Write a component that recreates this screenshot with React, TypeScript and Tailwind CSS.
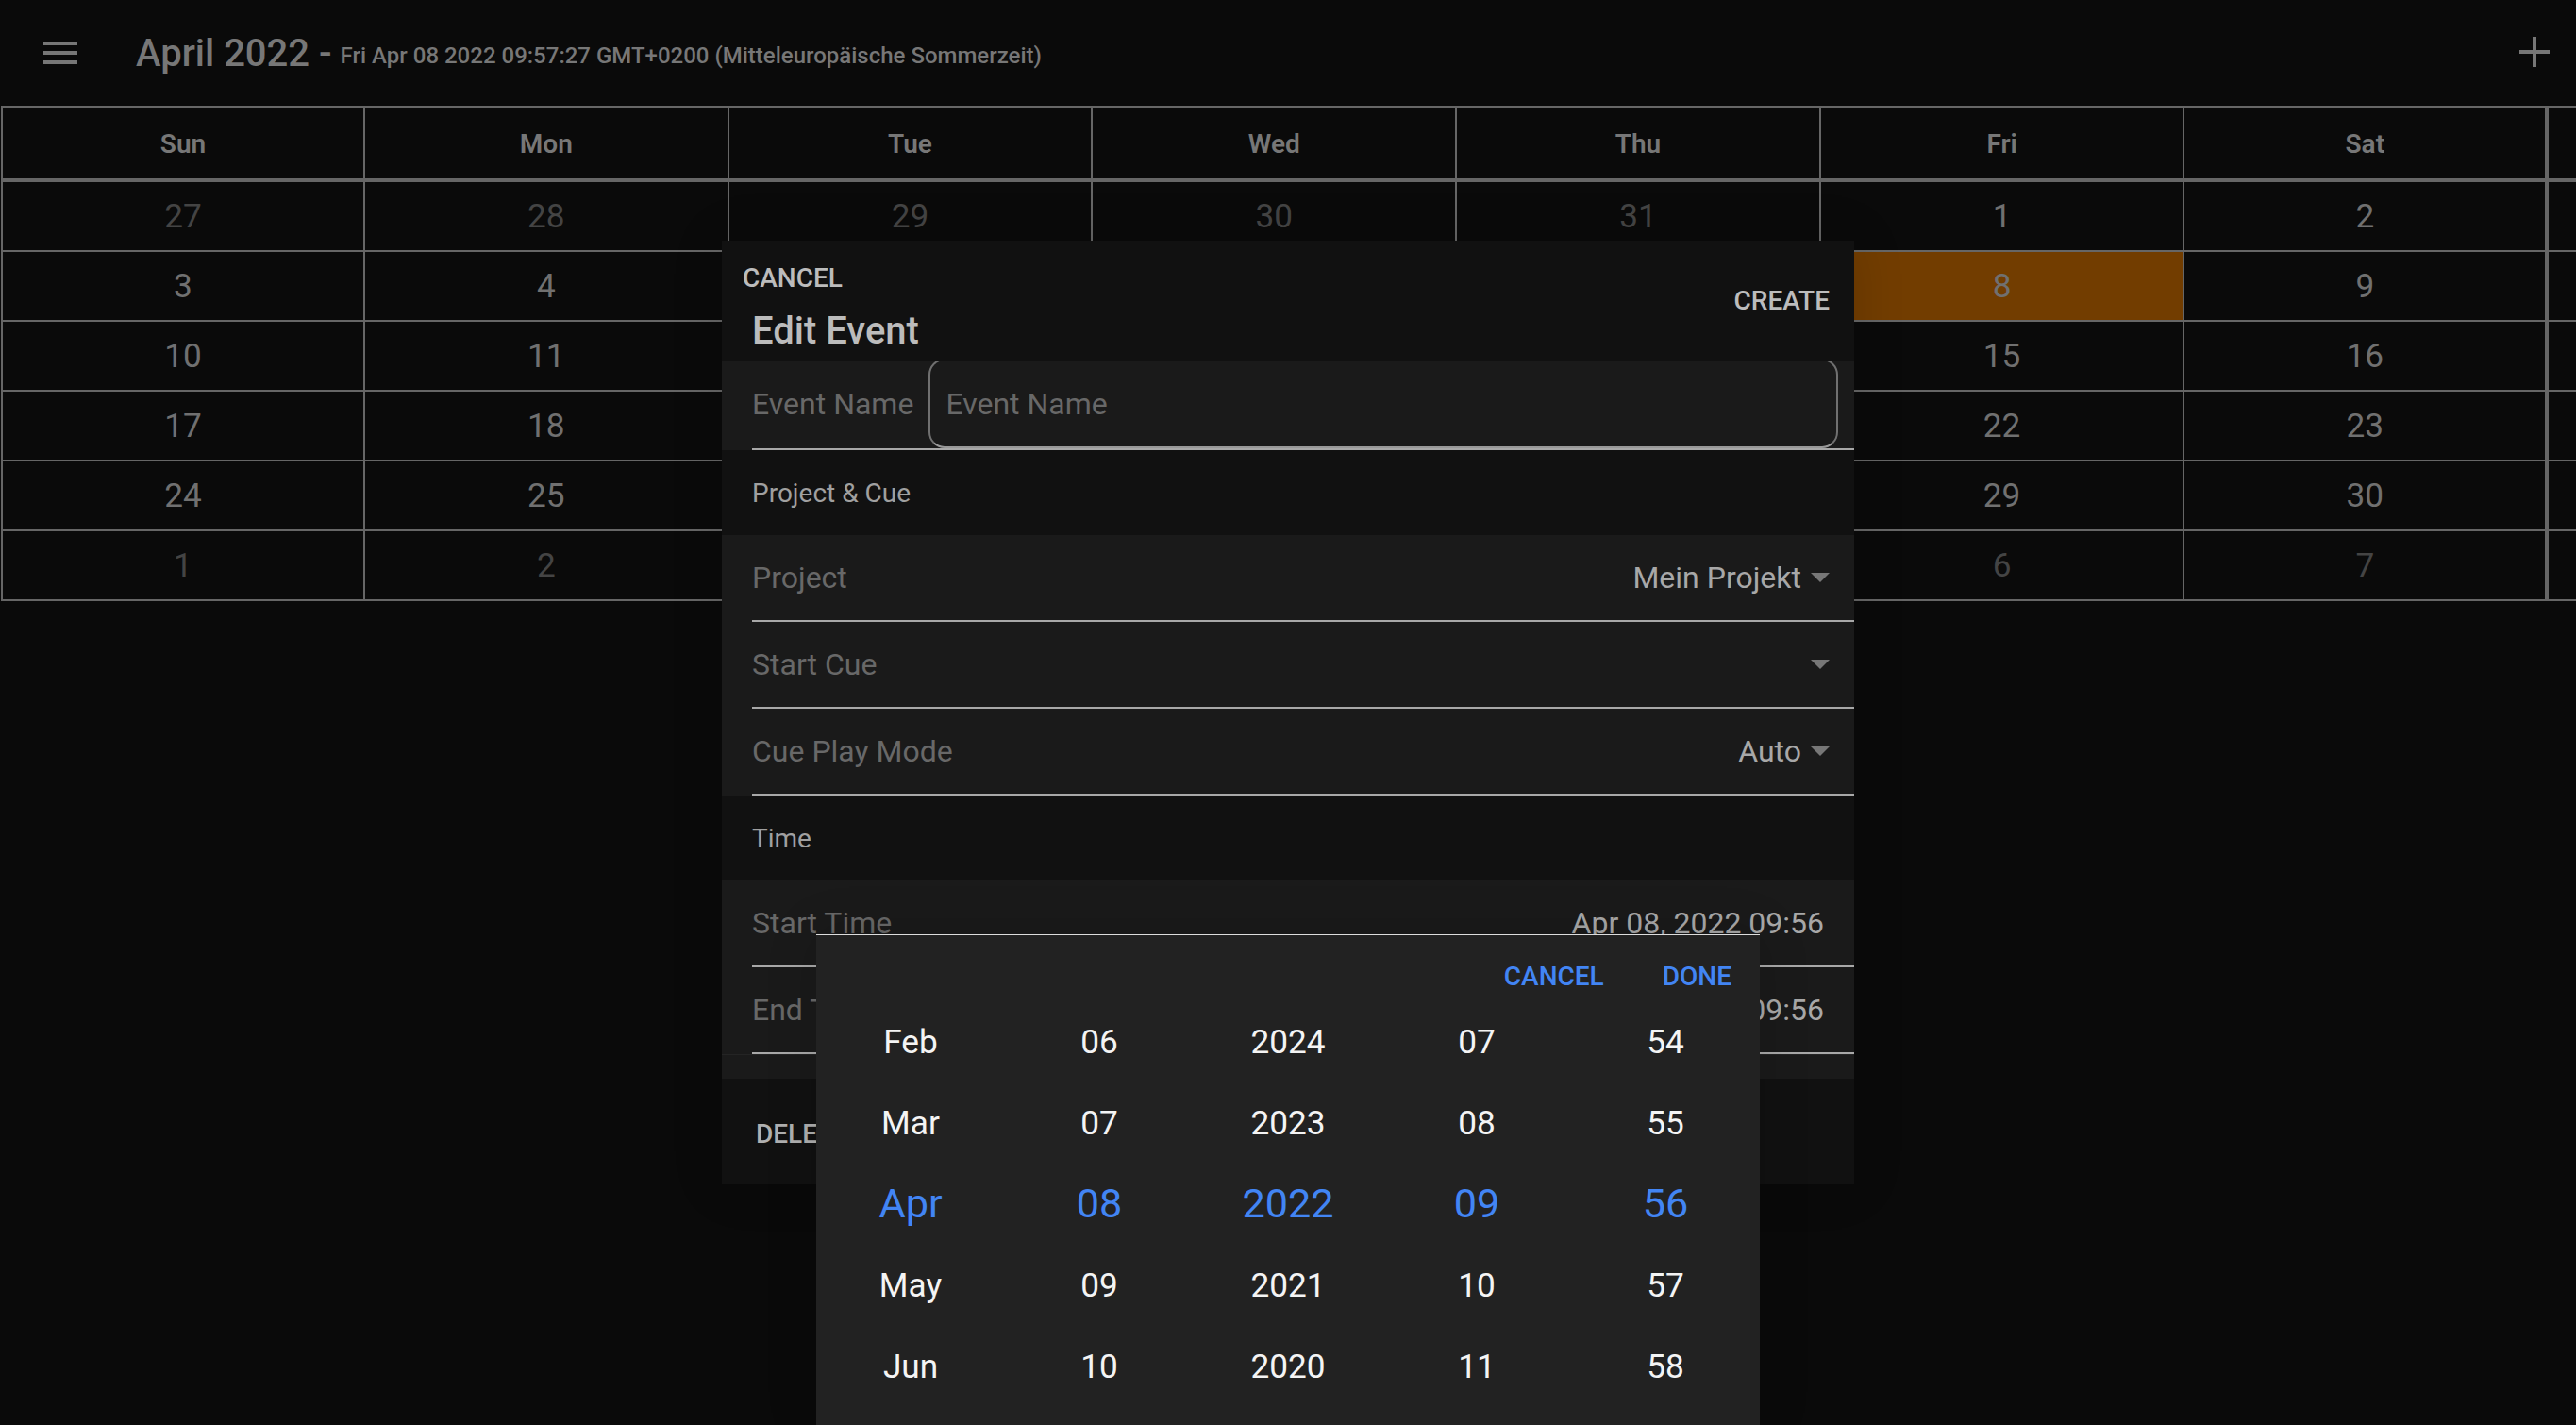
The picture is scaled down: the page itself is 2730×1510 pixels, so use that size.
import React from "react";

const weeks: [number, boolean][][] = [
  [[27, true], [28, true], [29, true], [30, true], [31, true], [1, false], [2, false]],
  [[3, false], [4, false], [5, false], [6, false], [7, false], [8, false], [9, false]],
  [[10, false], [11, false], [12, false], [13, false], [14, false], [15, false], [16, false]],
  [[17, false], [18, false], [19, false], [20, false], [21, false], [22, false], [23, false]],
  [[24, false], [25, false], [26, false], [27, false], [28, false], [29, false], [30, false]],
  [[1, true], [2, true], [3, true], [4, true], [5, true], [6, true], [7, true]],
];
const days = ["Sun", "Mon", "Tue", "Wed", "Thu", "Fri", "Sat"];

const columns = [
  ["Feb", "Mar", "Apr", "May", "Jun"],
  ["06", "07", "08", "09", "10"],
  ["2024", "2023", "2022", "2021", "2020"],
  ["07", "08", "09", "10", "11"],
  ["54", "55", "56", "57", "58"],
];

function Caret() {
  return (
    <svg width="20" height="10" viewBox="0 0 20 10" className="ml-[10px] shrink-0">
      <path d="M0 0H20L10 10Z" fill="#777777" />
    </svg>
  );
}

function SelectRow({ label, value }: { label: string; value?: string }) {
  return (
    <div className="ml-[32px] h-[92px] flex items-center justify-between border-b-2 border-[#a8a8a8] pr-[26px] pb-[1px]">
      <span className="text-[32px] text-[#686868]">{label}</span>
      <span className="flex items-center text-[32px] text-[#a8a8a8]">
        {value}
        <Caret />
      </span>
    </div>
  );
}

function TimeRow({ label, value }: { label: string; value: string }) {
  return (
    <div className="ml-[32px] h-[92px] flex items-center justify-between border-b-2 border-[#a8a8a8] pr-[32px] pb-[1px]">
      <span className="text-[32px] text-[#686868]">{label}</span>
      <span className="text-[32px] text-[#a8a8a8]">{value}</span>
    </div>
  );
}

function Section({ label }: { label: string }) {
  return (
    <div className="h-[90px] flex items-center pl-[32px] pt-[2px] bg-[#111111] text-[28px] text-[#a0a0a0]">{label}</div>
  );
}

export default function App() {
  return (
    <div className="relative w-[2730px] h-[1510px] overflow-hidden bg-[#0a0a0a] font-[Roboto,sans-serif]">
      <header className="h-[112px] flex items-center pl-[46px] pr-[28px] text-[#777777]">
        <svg width="36" height="24" viewBox="0 0 36 24" className="shrink-0">
          <rect x="0" y="0" width="36" height="4" fill="#777777" />
          <rect x="0" y="10" width="36" height="4" fill="#777777" />
          <rect x="0" y="20" width="36" height="4" fill="#777777" />
        </svg>
        <div className="ml-[62px] mt-[2px] flex items-baseline">
          <span className="text-[40px] font-medium">April 2022 -</span>
          <span className="ml-[9px] -translate-y-[3px] text-[24px] font-medium">Fri Apr 08 2022 09:57:27 GMT+0200 (Mitteleuropäische Sommerzeit)</span>
        </div>
        <svg width="32" height="32" viewBox="0 0 32 32" className="ml-auto mb-[2px] shrink-0">
          <path d="M16 0V32M0 16H32" stroke="#777777" strokeWidth="4" fill="none" />
        </svg>
      </header>

      <div className="grid grid-cols-[384px_repeat(6,385.7px)_1fr] ml-[1px] border-t-2 border-l-2 border-[#666666]">
        {days.map((d, i) => (
          <div
            key={d}
            className={`h-[79px] flex items-center justify-center border-b-4 border-[#666666] pt-[2px] text-[28px] font-semibold text-[#777777] ${i === 6 ? "border-r-4" : "border-r-2"}`}
          >
            {d}
          </div>
        ))}
        <div className="h-[79px] border-b-4 border-[#666666]" />
        {weeks.map((w, r) => (
          <React.Fragment key={r}>
            {w.map(([n, muted], i) => (
              <div
                key={i}
                className={`h-[74px] flex items-center justify-center border-b-2 border-[#666666] text-[35.2px] ${i === 6 ? "border-r-4" : "border-r-2"} ${muted ? "text-[#444444]" : "text-[#707070]"} ${r === 1 && i === 5 ? "bg-[#723d00]" : ""}`}
              >
                {n}
              </div>
            ))}
            <div className="h-[74px] border-b-2 border-[#666666]" />
          </React.Fragment>
        ))}
      </div>

      <div className="absolute inset-0 flex items-center justify-center">
        <div className="w-[1200px] h-[1000px] flex flex-col bg-[#111111] shadow-[0_0_50px_rgba(0,0,0,0.15)]">
          <div className="h-[128px] flex justify-between">
            <div className="flex flex-col">
              <span className="ml-[22px] mt-[24px] text-[28px] leading-[32px] font-medium text-[#bcbcbc]">CANCEL</span>
              <span className="ml-[32px] mt-[16px] text-[40px] leading-[48px] font-medium text-[#bcbcbc]">Edit Event</span>
            </div>
            <span className="mr-[26px] mt-[48px] text-[28px] leading-[32px] font-medium text-[#bcbcbc]">CREATE</span>
          </div>

          <div className="h-[94px] bg-[#1a1a1a] overflow-hidden">
            <div className="ml-[32px] h-[94px] flex border-b-2 border-[#a8a8a8]">
              <span className="self-center shrink-0 whitespace-nowrap text-[32px] text-[#686868] pb-[2px]">Event Name</span>
              <input
                readOnly
                placeholder="Event Name"
                className="ml-[16px] -mt-[3px] w-[964px] h-[95px] shrink-0 rounded-[17px] border-2 border-[#707070] border-b-[#999999] bg-transparent pl-[16px] text-[32px] placeholder:text-[#686868] outline-none"
              />
            </div>
          </div>

          <Section label="Project & Cue" />
          <div className="bg-[#1a1a1a]">
            <SelectRow label="Project" value="Mein Projekt" />
            <SelectRow label="Start Cue" />
            <SelectRow label="Cue Play Mode" value="Auto" />
          </div>
          <Section label="Time" />
          <div className="bg-[#1a1a1a]">
            <TimeRow label="Start Time" value="Apr 08, 2022 09:56" />
            <TimeRow label="End Time" value="Apr 08, 2022 09:56" />
            <div className="h-[26px] border-t border-[#242424]" />
          </div>
          <div className="flex-1 flex items-center pl-[36px] pt-[6px]">
            <span className="text-[28px] font-medium text-[#b0b0b0]">DELETE</span>
          </div>
        </div>
      </div>

      <div className="absolute inset-0 flex items-end justify-center">
        <div className="w-[1000px] h-[520px] bg-[#222222] border-t border-[#dddddd] shadow-[0_0_50px_rgba(0,0,0,0.15)]">
          <div className="mt-[18px] h-[52px] flex items-center justify-end gap-[62px] pr-[30px] text-[28px] font-medium text-[#4285f4]">
            <span>CANCEL</span>
            <span>DONE</span>
          </div>
          <div className="grid grid-cols-5">
            {columns.map((col, c) => (
              <div key={c} className="flex flex-col">
                {col.map((v, r) => (
                  <div
                    key={v}
                    className={`h-[86px] flex items-center justify-center ${r === 2 ? "text-[43.2px] text-[#4285f4]" : "text-[35.2px] text-[#f4f4f4]"}`}
                  >
                    {v}
                  </div>
                ))}
              </div>
            ))}
          </div>
        </div>
      </div>
    </div>
  );
}
